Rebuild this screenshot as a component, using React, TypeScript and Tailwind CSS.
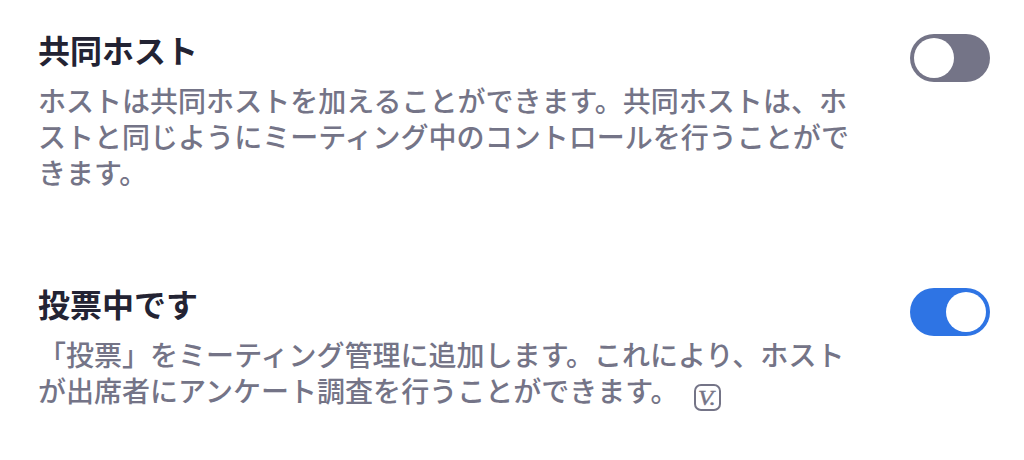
import { useState } from "react";

type Setting = {
    id: string;
    title: string;
    lines: string[];
    enabled: boolean;
    modified?: boolean;
};

const settings: Setting[] = [
    {
        id: "co-host",
        title: "共同ホスト",
        lines: [
            "ホストは共同ホストを加えることができます。共同ホストは、ホ",
            "ストと同じようにミーティング中のコントロールを行うことがで",
            "きます。",
        ],
        enabled: false,
    },
    {
        id: "polling",
        title: "投票中です",
        lines: [
            "「投票」をミーティング管理に追加します。これにより、ホスト",
            "が出席者にアンケート調査を行うことができます。",
        ],
        enabled: true,
        modified: true,
    },
];

const VersionBadge = () => (
    <span className="mt-[12px] ml-[15px] flex h-[27px] w-[27px] shrink-0 items-center rounded-[7px] border-2 border-[#747487] pl-[2px] font-['Liberation_Serif',serif] text-[20px] leading-none font-normal italic">
        <span className="origin-left scale-x-[1.25] tracking-[-0.5px] [-webkit-text-stroke:0.4px_#747487]">
            V.
        </span>
    </span>
);

type ToggleProps = {
    label: string;
    checked: boolean;
    onChange: () => void;
};

const Toggle = ({ label, checked, onChange }: ToggleProps) => (
    <button
        type="button"
        role="switch"
        aria-label={label}
        aria-checked={checked}
        onClick={onChange}
        className={`flex h-12 w-20 shrink-0 items-center rounded-full p-1 ${
            checked ? "justify-end bg-[#2e74e4]" : "justify-start bg-[#747487]"
        }`}
    >
        <span className="h-10 w-10 rounded-full bg-white" />
    </button>
);

export default function App() {
    const [enabled, setEnabled] = useState<Record<string, boolean>>(
        Object.fromEntries(settings.map(s => [s.id, s.enabled]))
    );

    const toggle = (id: string) => {
        setEnabled(prev => ({ ...prev, [id]: !prev[id] }));
    };

    return (
        <main
            lang="ja"
            className="h-[460px] w-[1024px] overflow-hidden bg-white pt-[34px] pr-[34px] pl-[38px] font-['Noto_Sans_CJK_JP',sans-serif]"
        >
            {settings.map(s => (
                <section key={s.id} className="flex h-[254px] items-start justify-between">
                    <div>
                        <h2 className="text-[32px] leading-[30px] font-bold text-[#232333]">
                            {s.title}
                        </h2>
                        <div className="mt-[18px] text-[28px] leading-[36px] font-medium tracking-[0.02px] whitespace-nowrap text-[#747487]">
                            {s.lines.map((line, i) => (
                                <div key={line} className="flex h-9">
                                    <span>{line}</span>
                                    {s.modified && i === s.lines.length - 1 && <VersionBadge />}
                                </div>
                            ))}
                        </div>
                    </div>
                    <Toggle
                        label={s.title}
                        checked={enabled[s.id]}
                        onChange={() => toggle(s.id)}
                    />
                </section>
            ))}
        </main>
    );
}
